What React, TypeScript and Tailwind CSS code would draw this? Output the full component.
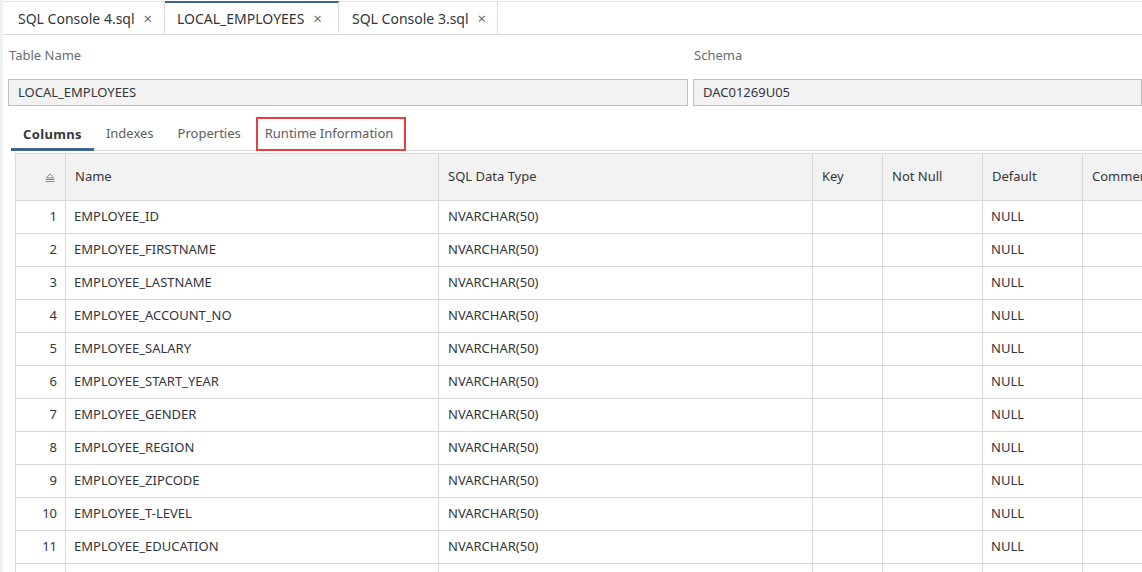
import React from "react";

const rows = [
  "EMPLOYEE_ID",
  "EMPLOYEE_FIRSTNAME",
  "EMPLOYEE_LASTNAME",
  "EMPLOYEE_ACCOUNT_NO",
  "EMPLOYEE_SALARY",
  "EMPLOYEE_START_YEAR",
  "EMPLOYEE_GENDER",
  "EMPLOYEE_REGION",
  "EMPLOYEE_ZIPCODE",
  "EMPLOYEE_T-LEVEL",
  "EMPLOYEE_EDUCATION",
  "",
];

function Tab({ label, active, w }: { label: string; active?: boolean; w: string }) {
  return (
    <div
      className={
        "flex items-center h-full border-r border-[#dcdcdc] pl-[10px] " +
        w +
        (active ? " border-t-2 border-t-[#3c6590] -mt-[1px]" : "")
      }
    >
      <span className="text-[14px] text-[#32363a] whitespace-nowrap">{label}</span>
      <span className="ml-[9px] text-[15px] leading-none text-[#6a6d70]">×</span>
    </div>
  );
}

function SortIcon() {
  return (
    <svg width="10" height="9" viewBox="0 0 10 9" fill="none">
      <path d="M5 0.8 L8.6 5 H1.4 Z" stroke="#8a8d90" strokeWidth="1" fill="none" />
      <path d="M0.5 6.5 H9.5 M0.5 8.5 H9.5" stroke="#8a8d90" strokeWidth="1" />
    </svg>
  );
}

export default function App() {
  const font = { fontFamily: '"Noto Sans", Arial, sans-serif' };
  return (
    <div className="w-[1142px] h-[572px] overflow-hidden bg-white flex" style={font}>
      <div className="w-[3px] shrink-0 bg-[#eef0f3]" />
      <div className="flex-1 flex flex-col min-w-0">
        {/* top tabs */}
        <div className="h-[34px] shrink-0 mt-[1px] border-t border-[#e3e3e3] border-b border-b-[#dcdcdc] flex pl-[5px]">
          <Tab label="SQL Console 4.sql" w="w-[157px]" />
          <Tab label="LOCAL_EMPLOYEES" active w="w-[174px] pl-[12px]" />
          <Tab label="SQL Console 3.sql" w="w-[159px] pl-[13px]" />
        </div>

        {/* fields */}
        <div className="flex pl-[5px] pt-[10px] gap-[5px]">
          <div className="w-[680px] flex flex-col">
            <div className="text-[13px] text-[#6a6d70] h-[20px] leading-[20px] pl-[1px]">Table Name</div>
            <div className="mt-[14px] h-[27px] bg-[#f2f2f2] border border-[#bfbfbf] flex items-center px-[9px] text-[13px] text-[#32363a]">
              LOCAL_EMPLOYEES
            </div>
          </div>
          <div className="flex-1 flex flex-col">
            <div className="text-[13px] text-[#6a6d70] h-[20px] leading-[20px] pl-[1px]">Schema</div>
            <div className="mt-[14px] h-[27px] bg-[#f2f2f2] border border-[#bfbfbf] flex items-center px-[9px] text-[13px] text-[#32363a]">
              DAC01269U05
            </div>
          </div>
        </div>

        {/* sub tabs */}
        <div className="ml-[8px] mt-[11px] h-[34px] border-b border-[#dcdcdc] flex items-end text-[13px]">
          <div className="h-full flex items-center pl-[12px] pr-[12px] font-bold text-[#32363a] border-b-[3px] border-[#3c6590] -mb-[1px] pt-[3px] tracking-[0.35px]">
            Columns
          </div>
          <div className="h-full flex items-center px-[12px] text-[#5a5e62]">Indexes</div>
          <div className="h-full flex items-center pl-[12px] pr-[15px] text-[#5a5e62]">Properties</div>
          <div className="h-[34px] flex items-center pl-[7px] pr-[11px] text-[#5a5e62] border-2 border-[#e83e3e] mb-[-1px]">
            Runtime Information
          </div>
        </div>

        {/* table */}
        <div className="ml-[12px] mt-[2px] border-l border-t border-[#d9d9d9] text-[13px] text-[#32363a]">
          <div className="flex h-[47px] bg-[#f2f2f2] border-b border-[#d9d9d9]">
            <div className="w-[50px] shrink-0 border-r border-[#d9d9d9] flex items-center justify-end pr-[10px]">
              <SortIcon />
            </div>
            <div className="w-[373px] shrink-0 border-r border-[#d9d9d9] flex items-center px-[9px]">Name</div>
            <div className="w-[374px] shrink-0 border-r border-[#d9d9d9] flex items-center px-[9px]">SQL Data Type</div>
            <div className="w-[70px] shrink-0 border-r border-[#d9d9d9] flex items-center px-[9px]">Key</div>
            <div className="w-[100px] shrink-0 border-r border-[#d9d9d9] flex items-center px-[9px]">Not Null</div>
            <div className="w-[100px] shrink-0 border-r border-[#d9d9d9] flex items-center px-[9px]">Default</div>
            <div className="flex-1 flex items-center px-[9px] whitespace-nowrap overflow-hidden">Comment</div>
          </div>
          {rows.map((name, i) => (
            <div key={i} className="flex h-[33px] border-b border-[#d9d9d9]">
              <div className="w-[50px] shrink-0 border-r border-[#d9d9d9] flex items-center justify-end pr-[8px]">
                {name ? i + 1 : ""}
              </div>
              <div className="w-[373px] shrink-0 border-r border-[#d9d9d9] flex items-center px-[8px]">{name}</div>
              <div className="w-[374px] shrink-0 border-r border-[#d9d9d9] flex items-center px-[9px]">
                {name ? "NVARCHAR(50)" : ""}
              </div>
              <div className="w-[70px] shrink-0 border-r border-[#d9d9d9]" />
              <div className="w-[100px] shrink-0 border-r border-[#d9d9d9]" />
              <div className="w-[100px] shrink-0 border-r border-[#d9d9d9] flex items-center px-[8px]">
                {name ? "NULL" : ""}
              </div>
              <div className="flex-1" />
            </div>
          ))}
        </div>
      </div>
    </div>
  );
}
